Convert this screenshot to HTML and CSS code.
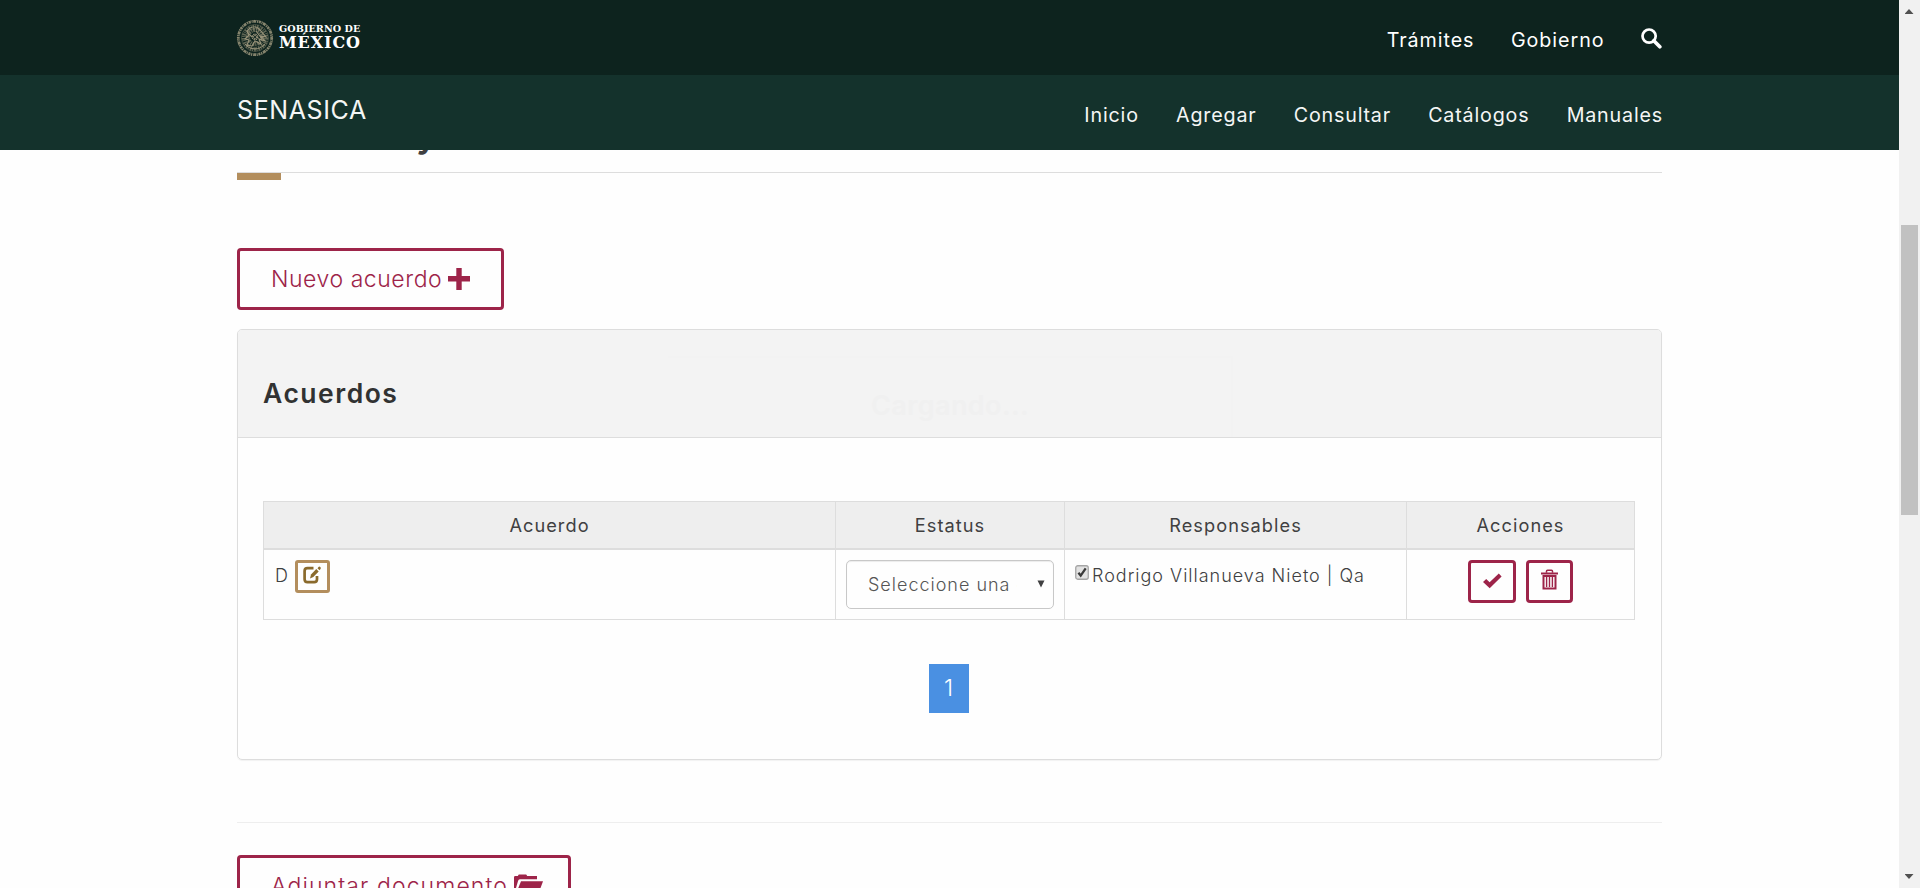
FILE: index.html
```
<!DOCTYPE html>
<html lang="es">
<head>
<meta charset="utf-8">
<title>SENASICA - Acuerdos</title>
<link rel="stylesheet" href="styles.css">
</head>
<body>
<div class="window">
  <div class="page">
    <header class="site-header">
      <div class="topbar">
        <div class="container bar">
          <a class="logo">
            <svg class="seal" width="38" height="38" viewBox="0 0 38 38" fill="none" stroke="#99947a">
              <circle cx="19" cy="19" r="16.6" stroke-width="2.6" stroke-dasharray="2 .8 1 .6 3 .9 1.2 .7" opacity=".85"/>
              <circle cx="19" cy="19" r="17.6" stroke-width=".7" stroke-dasharray="1 1.2"/>
              <circle cx="19" cy="19" r="13.6" stroke-width=".6" opacity=".5"/>
              <circle cx="19" cy="19" r="11" stroke-width="4.5" stroke-dasharray="1.6 1 .8 .7" opacity=".6"/>
              <circle cx="19" cy="18" r="7" stroke-width="4" stroke-dasharray="1.1 .8 2 .9" opacity=".65"/>
              <path d="M14 9c4-2 8-1 10 2l6 7-5-1 4 5-6-2 2 5-6-3-3 5-5-1 2-5-4-1 4-4-2-4zM9 25c5 6 14 7 20 0M11 13l5 5M20 12l6 8" stroke-width="1.1"/>
              <circle cx="19" cy="18" r="2.2" stroke-width="2.5" stroke-dasharray="1 .6"/>
            </svg>
            <span class="logo-text"><span class="logo-small">GOBIERNO DE</span><span class="logo-big">MÉXICO</span></span>
          </a>
          <nav class="menu menu-top">
            <a>Trámites</a><a>Gobierno</a>
            <a class="search"><svg width="21" height="21" viewBox="0 0 21 21" fill="none" stroke="#fff"><circle cx="8.1" cy="8.1" r="6.6" stroke-width="2.7"/><path d="M12.8 12.8l6 6" stroke-width="3.7" stroke-linecap="round"/></svg></a>
          </nav>
        </div>
      </div>
      <div class="subbar">
        <div class="container bar">
          <a class="brand">SENASICA</a>
          <nav class="menu">
            <a>Inicio</a><a>Agregar</a><a>Consultar</a><a>Catálogos</a><a>Manuales</a>
          </nav>
        </div>
      </div>
    </header>

    <main class="container">
      <h2 class="title">y</h2>
      <div class="title-rule"></div>

      <button class="btn btn-large btn-new"><span>Nuevo acuerdo</span><svg width="22" height="22" viewBox="0 0 22 22" fill="#9d2449"><path d="M8.300 0h5.400v8.100H22v5.500h-8.300V22H8.300v-8.400H0V8.100h8.300z"/></svg></button>

      <section class="panel">
        <div class="panel-heading"><h3>Acuerdos</h3><div class="loading">Cargando...</div></div>
        <div class="panel-body">
          <table class="table">
            <thead><tr><th class="col-a">Acuerdo</th><th class="col-e">Estatus</th><th class="col-r">Responsables</th><th class="col-x">Acciones</th></tr></thead>
            <tbody><tr>
              <td><div class="cell"><span>D</span><button class="btn-edit"><svg width="19" height="18" viewBox="0 0 19 18" fill="none" stroke="#8a6a2c"><path d="M10.500 2.200H4.500Q1.600 2.200 1.600 5v8.300q0 2.900 2.900 2.900h6.600q2.900 0 2.900-2.900V10" stroke-width="2.700"/><path d="M7 12.600l1-4 5.300-5.600 2.400 2.400-5.400 5.600z" fill="#8a6a2c" stroke="none"/><path d="M14.500 2.200l1-1.200q.8-.8 1.800.1t.2 1.900l-1 1.200z" fill="#8a6a2c" stroke="none"/></svg></button></div></td>
              <td><div class="select"><span class="select-text">Seleccione una opción</span><svg width="8" height="8" viewBox="0 0 8 8" fill="#404041"><path d="M.5.5h7L4 7.500z"/></svg></div></td>
              <td><label class="check"><svg class="checkbox" width="14" height="15" viewBox="0 0 14 15" fill="none"><rect x=".75" y=".75" width="12.500" height="13.500" rx="2" fill="#e2e2e2" stroke="#a5a5a5" stroke-width="1.300"/><path d="M3.400 7.800l2.300 2.800 5-7.300" stroke="#3a3a3a" stroke-width="2.300"/></svg><span>Rodrigo Villanueva Nieto | Qa</span></label></td>
              <td><div class="actions">
                <button class="btn btn-action"><svg width="19" height="16" viewBox="0 0 19 16" fill="#9d2449"><path d="M0 9l3.200-3 3.400 3.300L15.800.5 18.600 3.400 6.700 15.300z"/></svg></button>
                <button class="btn btn-action btn-trash"><svg width="17" height="21" viewBox="0 0 17 21" fill="none" stroke="#9d2449"><path d="M5.500 3.700V2.200Q5.500 1.200 6.500 1.200h4q1 0 1 1v1.500" stroke-width="1.500"/><path d="M0 4.500h17" stroke-width="2"/><path d="M2.500 7v12.500h12V7z" stroke-width="2"/><path d="M5.600 8v10M8.500 8v10M11.400 8v10" stroke-width="1.400"/></svg></button>
              </div></td>
            </tr></tbody>
          </table>
          <div class="pagination"><a>1</a></div>
        </div>
      </section>

      <hr class="divider">
      <button class="btn btn-large btn-attach"><span>Adjuntar documento</span><svg width="29" height="24" viewBox="0 0 29 24" fill="#9d2449"><path d="M0 21V3.200Q0 2 1.200 2h2.600l1-1.500h7.400l1 1.500H23v3.300H6.200q-1.500 0-2.100 1.400z"/><path d="M7 7.300h22L23.500 22H1z"/></svg></button>
    </main>
  </div>
  <div class="scrollbar">
    <span class="arrow arrow-up"></span>
    <span class="thumb"></span>
    <span class="arrow arrow-down"></span>
  </div>
</div>
</body>
</html>
```
FILE: styles.css
```
* { box-sizing: border-box; }
body {
  margin: 0;
  height: 888px;
  overflow: hidden;
  background: #fefefe;
  color: #404041;
  font-family: Inter, "Liberation Sans", sans-serif;
  font-size: 18px;
}
button { font-family: inherit; cursor: pointer; }
svg { display: block; flex: none; }
.window { display: flex; height: 888px; overflow: hidden; }
.page { flex: 1; height: 888px; overflow: hidden; }
.container { width: 1425px; margin-left: 237px; }

/* Header */
.site-header { position: relative; z-index: 2; color: #fff; }
.topbar { height: 75px; background: #0d231e; }
.subbar { height: 75px; background: #14322c; }
.bar { display: flex; justify-content: space-between; align-items: center; height: 75px; }
.logo { display: flex; align-items: center; gap: 5px; }
.seal { margin-left: -1px; }
.logo-text { display: flex; flex-direction: column; font-family: "DejaVu Serif", serif; font-weight: 700; white-space: nowrap; }
.logo-small { font-size: 9.600px; line-height: 11px; letter-spacing: .08px; }
.logo-big { font-size: 16px; line-height: 18px; letter-spacing: .9px; }
.menu { display: flex; align-items: center; gap: 37.200px; padding-top: 5px; font-size: 19.700px; line-height: 24px; letter-spacing: .82px; margin-right: -1px; color: #f4f6f5; }
.menu-top { letter-spacing: .95px; gap: 36.500px; margin-right: 0; color: #fff; }
.search { margin-top: -4px; }
.brand { font-size: 25px; line-height: 30px; letter-spacing: .6px; margin-top: -5px; color: #f4f6f5; }

/* Section title */
.title { margin: -36px 0 0; padding-left: 179px; height: 58px; font-size: 36px; line-height: 40px; font-weight: 600; }
.title-rule { height: 8px; border-top: 1px solid #ddd; }
.title-rule::after { content: ""; display: block; width: 44px; height: 7px; background: #b38e5d; }

/* Buttons */
.btn { display: flex; align-items: center; background: #fefefe; border: 3px solid #9d2449; border-radius: 4px; color: #9d2449; }
.btn-large { height: 62px; padding: 0 0 0 31px; font-size: 23px; font-weight: 300; white-space: nowrap; }
.btn-new { width: 267px; margin-top: 68px; letter-spacing: .55px; gap: 6px; }
.btn-attach { width: 334px; letter-spacing: 1.1px; gap: 6px; }

/* Panel */
.panel { margin-top: 19px; height: 431px; border: 1px solid #ddd; border-radius: 5px; box-shadow: 0 1px 1px rgba(0, 0, 0, .05); overflow: hidden; }
.panel-heading { position: relative; height: 108px; padding: 18px 25px 0; display: flex; align-items: center; background: #f3f3f3; border-bottom: 1px solid #ddd; }
.panel-heading h3 { margin: 0; font-size: 26.500px; font-weight: 600; line-height: 32px; letter-spacing: 1.5px; color: #313232; }
.loading { position: absolute; top: 26px; left: 430px; width: 565px; height: 81px; padding: 32px 0 0 203px; border: solid #f2f2f2; border-width: 2px 2px 0 0; font-size: 27px; line-height: 32px; font-weight: 600; letter-spacing: .4px; color: #f0f0f0; }
.panel-body { padding: 63px 25px 0; }

/* Table */
.table { width: 1372px; border-collapse: collapse; table-layout: fixed; }
.table th, .table td { border: 1px solid #ddd; padding: 0; }
.table th { height: 47px; background: #eee; border-bottom-width: 2px; font-weight: 400; font-size: 18.200px; letter-spacing: 1.050px; }
.table td { height: 71px; padding: 10px 10px 9px; vertical-align: top; font-weight: 300; letter-spacing: .99px; }
.col-a { width: 572px; }
.col-e { width: 229px; }
.col-r { width: 342px; }
.cell { display: flex; gap: 6px; padding-left: 1px; line-height: 31px; }
.btn-edit { width: 35px; height: 33px; padding: 0 0 2px; display: flex; align-items: center; justify-content: center; background: #fefefe; border: 3px solid #b38e5d; border-radius: 3px; }
.select { width: 208px; height: 49px; padding: 0 8px 0 21px; display: flex; align-items: center; justify-content: space-between; border: 1px solid #c8c8c8; border-radius: 5px; color: #555; box-shadow: inset 0 1px 1px rgba(0, 0, 0, .075); }
.select-text { width: 149px; overflow: hidden; white-space: nowrap; }
.check { display: flex; gap: 3px; line-height: 31px; white-space: nowrap; }
.checkbox { margin-top: 5px; }
.actions { display: flex; gap: 10px; padding-left: 51px; }
.btn-action { width: 48px; height: 43px; padding: 0; justify-content: center; }
.btn-trash { width: 47px; padding-bottom: 3px; }

.pagination { display: flex; justify-content: center; margin: 44px 2px 0 0; }
.pagination a { width: 40px; height: 49px; line-height: 49px; text-align: center; font-size: 23px; font-weight: 300; color: #fff; background: #4a90e2; }

.divider { margin: 62px 0 32px; border: 0; border-top: 1px solid #eee; }

/* Window scrollbar */
.scrollbar { width: 21px; height: 888px; display: flex; flex-direction: column; align-items: center; background: #f1f1f1; padding: 9px 2px 9px 1px; }
.arrow { width: 9px; height: 5px; background: #505050; }
.arrow-up { clip-path: polygon(50% 0, 100% 100%, 0 100%); }
.arrow-down { clip-path: polygon(0 0, 100% 0, 50% 100%); margin-top: auto; }
.thumb { width: 17px; height: 290px; margin-top: 211px; background: #c1c1c1; }
```
